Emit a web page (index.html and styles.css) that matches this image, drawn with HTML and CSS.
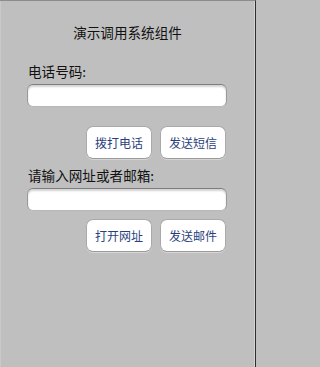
FILE: index.html
```html
<!DOCTYPE html>
<html>
<head>
<meta charset="utf-8">
<link rel="stylesheet" href="styles.css">
</head>
<body>
<div class="screen">
  <div class="title">演示调用系统组件</div>
  <div class="form">
    <div class="label l1">电话号码:</div>
    <div class="field"></div>
    <div class="btns b1">
      <div class="btn">拨打电话</div>
      <div class="btn">发送短信</div>
    </div>
    <div class="label l2">请输入网址或者邮箱:</div>
    <div class="field"></div>
    <div class="btns b2">
      <div class="btn">打开网址</div>
      <div class="btn">发送邮件</div>
    </div>
  </div>
</div>
</body>
</html>
```
FILE: styles.css
```css
html, body {
  margin: 0;
  padding: 0;
  background: #bfbfbf;
}
.screen {
  box-sizing: border-box;
  width: 256px;
  height: 367px;
  background: #bfbfbf;
  border-top: 1px solid #8c8c8c;
  border-right: 1px solid #2e2e2e;
  box-shadow: inset -1px 0 #d4d4d4, inset 1px 0 #c9c9c9;
  font-family: "Noto Sans CJK SC", "Liberation Sans", sans-serif;
  color: #111;
  padding-top: 21px;
}
.title {
  font-size: 13.6px;
  line-height: 20px;
  height: 20px;
  text-align: center;
}
.form {
  display: flex;
  flex-direction: column;
  width: 200px;
  margin-left: 27px;
}
.label {
  font-size: 13.6px;
  line-height: 20px;
  height: 20px;
  padding-left: 1px;
}
.l1 { margin-top: 19px; }
.l2 { margin-top: 6px; }
.field {
  box-sizing: border-box;
  margin-top: 3px;
  height: 23px;
  background: #fff;
  border-radius: 6px;
  border: 1px solid #9a9a9a;
  border-top-color: #7e7e7e;
  border-bottom-color: #b8b8b8;
  box-shadow: inset 0 2px 2px rgba(0,0,0,0.18);
}
.btns {
  display: flex;
  justify-content: flex-end;
  gap: 8px;
  padding-right: 1px;
}
.b1 { margin-top: 19px; }
.b2 { margin-top: 8px; }
.btn {
  box-sizing: border-box;
  width: 66px;
  height: 33px;
  background: #fff;
  border: 1px solid #a9a9a9;
  border-bottom-color: #9a9a9a;
  border-radius: 7px;
  box-shadow: 0 1px 0 #d6d6d6;
  display: flex;
  align-items: center;
  justify-content: center;
  font-size: 12px;
  color: #2b3f7c;
}
```
